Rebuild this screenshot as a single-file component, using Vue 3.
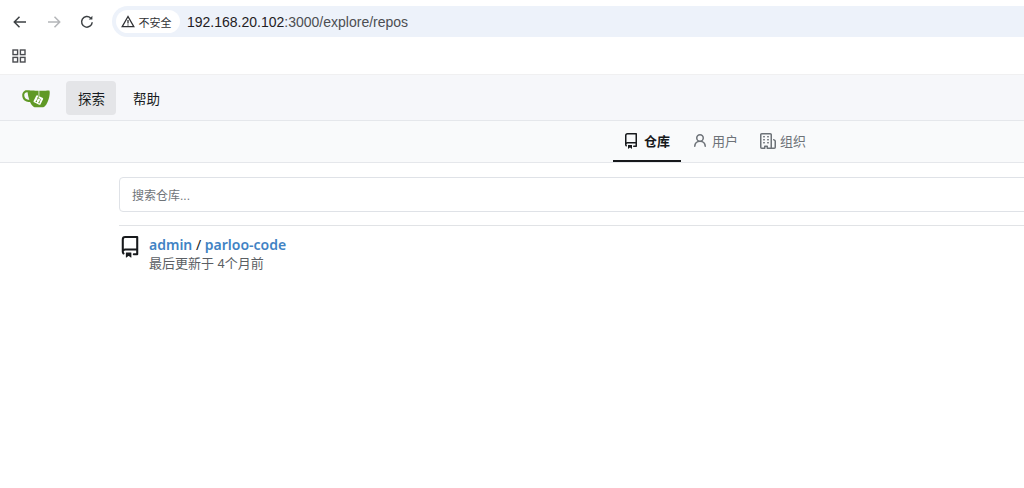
<script setup>
const tabs = [
  { label: '仓库', active: true, icon: 'repo' },
  { label: '用户', active: false, icon: 'user' },
  { label: '组织', active: false, icon: 'org' }
]
</script>

<template>
  <div class="page">
    <header class="chrome">
      <div class="toolbar">
        <button class="tool">
          <svg width="16" height="16" viewBox="0 0 16 16" fill="none" stroke="#3c4043" stroke-width="1.5"><path d="M14 8H2.500M7.500 2.800 2.300 8l5.200 5.200"/></svg>
        </button>
        <button class="tool">
          <svg width="16" height="16" viewBox="0 0 16 16" fill="none" stroke="#b4b6b9" stroke-width="1.5"><path d="M2 8h11.500M8.500 2.800 13.700 8l-5.200 5.200"/></svg>
        </button>
        <button class="tool reload">
          <svg width="16" height="16" viewBox="0 0 16 16" fill="none" stroke="#3c4043" stroke-width="1.5"><path d="M13.200 8.200A5.300 5.300 0 1 1 11.600 4"/><path d="M13.400 1.800v3.700H9.700" fill="#3c4043" stroke="none"/></svg>
        </button>
        <div class="omnibox">
          <div class="chip">
            <svg width="14" height="13" viewBox="0 0 14 13" fill="none" stroke="#303134" stroke-width="1.3"><path d="M7 1.500 1.200 11.700h11.600Z"/><path d="M7 5v3.600M7 9.400v1.100"/></svg>
            <span>不安全</span>
          </div>
          <div class="url"><span class="host">192.168.20.102</span><span class="rest">:3000/explore/repos</span></div>
        </div>
      </div>
      <div class="bookmarks">
        <svg width="14" height="14" viewBox="0 0 14 14" fill="none" stroke="#4a4c50" stroke-width="1.4"><rect x="1" y="1" width="4.600" height="4.600"/><rect x="8.400" y="1" width="4.600" height="4.600"/><rect x="1" y="8.400" width="4.600" height="4.600"/><rect x="8.400" y="8.400" width="4.600" height="4.600"/></svg>
      </div>
    </header>

    <nav class="topnav">
      <svg class="logo" width="28" height="28" viewBox="0 0 640 640">
        <path fill="#fff" d="M395.900 484.200l-126.900-61c-12.500-6-17.900-21.200-11.800-33.800l61-126.900c6-12.500 21.200-17.900 33.800-11.800 17.200 8.300 27.100 13 27.100 13l-.1-109.200 16.700-.1.100 117.100s57.400 24.200 83.100 40.100c3.700 2.300 10.200 6.800 12.900 14.400 2.100 6.100 2 13.100-1 19.300l-61 126.900c-6.200 12.700-21.400 18.100-33.900 12z"/>
        <path fill="#609926" d="M622.700 149.800c-4.100-4.100-9.600-4-9.600-4s-117.200 6.600-177.900 8c-13.300.3-26.500.6-39.600.7v117.200c-5.500-2.600-11.100-5.300-16.600-7.900 0-36.400-.1-109.200-.1-109.200-29 .4-89.200-2.200-89.200-2.200s-141.400-7.100-156.800-8.500c-9.800-.6-22.500-2.100-39 1.500-8.700 1.800-33.500 7.400-53.800 26.900C-4.900 212.400 6.600 276.200 8 285.800c1.700 11.700 6.900 44.200 31.700 72.500 45.800 56.100 144.400 54.800 144.400 54.800s12.100 28.900 30.600 55.500c25 33.100 50.700 58.900 75.700 62 63 0 188.900-.1 188.900-.1s12 .1 28.300-10.300c14-8.500 26.500-23.400 26.500-23.400S547 483 565 451.500c5.500-9.700 10.100-19.100 14.100-28 0 0 55.200-117.100 55.200-231.100-1.100-34.500-9.600-40.600-11.600-42.600zM125.600 353.900c-25.900-8.500-36.900-18.700-36.900-18.700S69.600 321.800 60 295.400c-16.500-44.200-1.400-71.200-1.400-71.200s8.400-22.500 38.500-30c13.800-3.700 31-3.100 31-3.100s7.100 59.400 15.700 94.200c7.200 29.200 24.800 77.700 24.800 77.700s-26.100-3.100-43-9.100zm300.300 107.600s-6.100 14.500-19.600 15.400c-5.800.4-10.300-1.200-10.300-1.200s-.3-.1-5.300-2.100l-112.900-55s-10.900-5.700-12.800-15.600c-2.200-8.100 2.700-18.100 2.700-18.100L322 273s4.800-9.700 12.200-13c.6-.3 2.300-1 4.500-1.500 8.100-2.100 18 2.800 18 2.800L467.400 315s12.600 5.700 15.300 16.200c1.900 7.400-.5 14-1.800 17.200-6.300 15.400-55 113.100-55 113.100z"/>
        <path fill="#609926" d="M326.800 380.100c-8.200.1-15.400 5.800-17.300 13.800-1.900 8 2 16.300 9.100 20 7.700 4 17.500 1.800 22.700-5.400 5.100-7.100 4.300-16.900-1.800-23.100l24-49.100c1.500.1 3.700.2 6.200-.5 4.100-.9 7.100-3.600 7.100-3.600 4.200 1.800 8.600 3.800 13.200 6.100 4.800 2.400 9.300 4.900 13.400 7.300.9.500 1.800 1.100 2.800 1.900 1.600 1.300 3.400 3.100 4.700 5.500 1.900 5.500-1.900 14.900-1.900 14.900-2.300 7.600-18.400 40.600-18.400 40.600-8.100-.2-15.300 5-17.700 12.500-2.600 8.100 1.100 17.300 8.900 21.300 7.800 4 17.400 1.700 22.500-5.300 5-6.800 4.600-16.300-1.100-22.600 1.900-3.700 3.700-7.400 5.600-11.300 5-10.400 13.500-30.400 13.500-30.400.9-1.700 5.700-10.300 2.700-21.300-2.500-11.400-12.600-16.700-12.600-16.700-12.200-7.900-29.200-15.200-29.200-15.200s0-4.100-1.100-7.100c-1.100-3.100-2.800-5.100-3.900-6.300 4.700-9.700 9.400-19.300 14.100-29-4.100-2-8.100-4-12.200-6.100-4.800 9.800-9.700 19.700-14.500 29.500-6.700-.1-12.900 3.500-16.100 9.400-3.400 6.300-2.700 14.100 1.900 19.800-8.200 16.800-16.400 33.600-24.600 50.400z"/>
      </svg>
      <a class="nav-item current">探索</a>
      <a class="nav-item">帮助</a>
    </nav>

    <div class="subnav">
      <a v-for="tab in tabs" :key="tab.label" class="tab" :class="{ active: tab.active }">
        <svg v-if="tab.icon === 'repo'" width="16" height="16" viewBox="0 0 16 16" fill="currentColor"><path d="M2 2.500A2.500 2.500 0 0 1 4.500 0h8.750a.75.75 0 0 1 .75.75v12.500a.75.75 0 0 1-.75.75h-2.500a.75.75 0 0 1 0-1.500h1.750v-2h-8a1 1 0 0 0-.714 1.700.75.75 0 1 1-1.072 1.050A2.495 2.495 0 0 1 2 11.500Zm10.500-1h-8a1 1 0 0 0-1 1v6.708A2.486 2.486 0 0 1 4.500 9h8ZM5 12.250a.25.25 0 0 1 .25-.25h3.500a.25.25 0 0 1 .25.25v3.250a.25.25 0 0 1-.4.2l-1.450-1.087a.249.249 0 0 0-.3 0L5.400 15.700a.25.25 0 0 1-.4-.2Z"/></svg>
        <svg v-else-if="tab.icon === 'user'" width="16" height="16" viewBox="0 0 16 16" fill="currentColor"><path d="M10.561 8.073a6.005 6.005 0 0 1 3.432 5.142.75.75 0 1 1-1.498.07 4.500 4.500 0 0 0-8.990 0 .75.75 0 0 1-1.498-.07 6.004 6.004 0 0 1 3.431-5.142 3.999 3.999 0 1 1 5.123 0ZM10.500 5a2.500 2.500 0 1 0-5 0 2.500 2.500 0 0 0 5 0Z"/></svg>
        <svg v-else width="16" height="16" viewBox="0 0 16 16" fill="currentColor"><path d="M1.750 16A1.750 1.750 0 0 1 0 14.250V1.750C0 .784.784 0 1.750 0h8.500C11.216 0 12 .784 12 1.750v12.500c0 .085-.006.168-.018.250h2.268a.25.25 0 0 0 .25-.25V8.285a.25.25 0 0 0-.111-.208l-1.055-.703a.749.749 0 1 1 .832-1.248l1.055.703c.487.325.779.871.779 1.456v5.965A1.750 1.750 0 0 1 14.250 16h-3.500a.766.766 0 0 1-.197-.026c-.099.017-.2.026-.303.026h-3a.750.750 0 0 1-.75-.75V14h-1v1.250a.750.750 0 0 1-.75.75Zm-.25-1.750c0 .138.112.250.250.250H4v-1.250a.750.750 0 0 1 .75-.75h2.500a.750.750 0 0 1 .75.750v1.250h2.250a.25.25 0 0 0 .25-.25V1.750a.25.25 0 0 0-.25-.25h-8.500a.25.25 0 0 0-.25.25ZM3.750 6h.5a.75.75 0 0 1 0 1.500h-.5a.75.75 0 0 1 0-1.500ZM3 3.750A.75.75 0 0 1 3.750 3h.5a.75.75 0 0 1 0 1.500h-.5A.75.75 0 0 1 3 3.750Zm4 3A.75.75 0 0 1 7.750 6h.5a.75.75 0 0 1 0 1.500h-.5A.75.75 0 0 1 7 6.750ZM7.750 3h.5a.75.75 0 0 1 0 1.500h-.5a.75.75 0 0 1 0-1.500ZM3 9.750A.75.75 0 0 1 3.750 9h.5a.75.75 0 0 1 0 1.500h-.5A.75.75 0 0 1 3 9.750ZM7.750 9h.5a.75.75 0 0 1 0 1.500h-.5a.75.75 0 0 1 0-1.500Z"/></svg>
        <span>{{ tab.label }}</span>
      </a>
    </div>

    <main class="content">
      <div class="search">搜索仓库...</div>
      <div class="divider"></div>
      <div class="repo">
        <svg class="repo-icon" width="22" height="22" viewBox="0 0 16 16" fill="#17191c"><path d="M2 2.500A2.500 2.500 0 0 1 4.500 0h8.750a.75.75 0 0 1 .75.75v12.500a.75.75 0 0 1-.75.75h-2.500a.75.75 0 0 1 0-1.500h1.750v-2h-8a1 1 0 0 0-.714 1.700.75.75 0 1 1-1.072 1.050A2.495 2.495 0 0 1 2 11.500Zm10.500-1h-8a1 1 0 0 0-1 1v6.708A2.486 2.486 0 0 1 4.500 9h8ZM5 12.250a.25.25 0 0 1 .25-.25h3.500a.25.25 0 0 1 .25.25v3.250a.25.25 0 0 1-.4.2l-1.450-1.087a.249.249 0 0 0-.3 0L5.400 15.700a.25.25 0 0 1-.4-.2Z"/></svg>
        <div class="repo-text">
          <div class="repo-title"><a>admin</a> <span class="slash">/</span> <a>parloo-code</a></div>
          <div class="repo-meta">最后更新于 4个月前</div>
        </div>
      </div>
    </main>
  </div>
</template>

<style>
html, body { margin: 0; background: #fff; }
</style>

<style scoped>
.page {
  width: 1024px;
  height: 488px;
  overflow: hidden;
  background: #fff;
  font-family: "Liberation Sans", "Noto Sans CJK SC", sans-serif;
  color: #181c21;
}
.toolbar {
  height: 37px;
  padding: 6px 0 0 11px;
  box-sizing: border-box;
  display: flex;
  align-items: flex-start;
}
.tool {
  flex: none;
  width: 17px;
  height: 31px;
  margin-right: 17px;
  padding: 0;
  border: 0;
  background: none;
  display: flex;
  align-items: center;
  justify-content: center;
}
.reload { margin-left: -1px; }
.omnibox {
  flex: none;
  width: 960px;
  height: 31px;
  border-radius: 16px 0 0 16px;
  background: #edf2fa;
  display: flex;
  align-items: center;
  padding-left: 4px;
  box-sizing: border-box;
}
.chip {
  height: 23px;
  width: 64px;
  border-radius: 12px;
  background: #fff;
  display: flex;
  align-items: center;
  justify-content: center;
  gap: 4px;
  padding-right: 4px;
  font-size: 11px;
  color: #303134;
  box-sizing: border-box;
}
.url {
  margin-left: 7px;
  font-size: 14px;
  white-space: nowrap;
}
.host { color: #1f2023; }
.rest { color: #4c4e52; }
.bookmarks {
  height: 37px;
  padding-left: 12px;
  display: flex;
  align-items: center;
  border-bottom: 1px solid #f0f0f1;
}
.topnav {
  height: 45px;
  background: #f6f7fa;
  border-bottom: 1px solid #e5e7eb;
  display: flex;
  align-items: center;
  padding-left: 22px;
}
.logo { margin-right: 16px; flex: none; }
.nav-item {
  height: 34px;
  padding: 0 11px 0 12px;
  display: flex;
  align-items: center;
  border-radius: 4px;
  font-size: 13.500px;
  color: #181c21;
  margin-right: 5px;
}
.nav-item.current { background: #e4e5e8; }
.subnav {
  height: 41px;
  background: #f9fafb;
  border-bottom: 1px solid #e5e7eb;
  display: flex;
  justify-content: flex-start;
  padding-left: 613px;
}
.tab {
  height: 41px;
  padding: 0 11px 2px;
  display: flex;
  align-items: center;
  gap: 4px;
  font-size: 13px;
  color: #6d7278;
  box-sizing: border-box;
}
.tab.active {
  color: #17191c;
  font-weight: 700;
  border-bottom: 2px solid #17191c;
  padding: 0 11px 0 10px;
  gap: 5px;
}
.tab svg { flex: none; }
.content { padding: 14px 0 0 119px; }
.search {
  width: 960px;
  height: 35px;
  box-sizing: border-box;
  border: 1px solid #dfe2e7;
  border-radius: 4px;
  padding-left: 12px;
  display: flex;
  align-items: center;
  font-size: 12px;
  color: #6f7479;
}
.divider {
  width: 960px;
  margin-top: 13px;
  border-top: 1px solid #e1e3e6;
}
.repo {
  margin-top: 10px;
  display: flex;
}
.repo-icon { margin-right: 8px; flex: none; }
.repo-title { font-family: "Noto Sans", "Noto Sans CJK SC", sans-serif; font-size: 14px; line-height: 18px; font-weight: 600; }
.repo-title a { color: #4183c4; }
.slash { color: #181c21; font-weight: 400; }
.repo-meta { font-size: 13px; line-height: 19px; color: #5a5e63; }
</style>
